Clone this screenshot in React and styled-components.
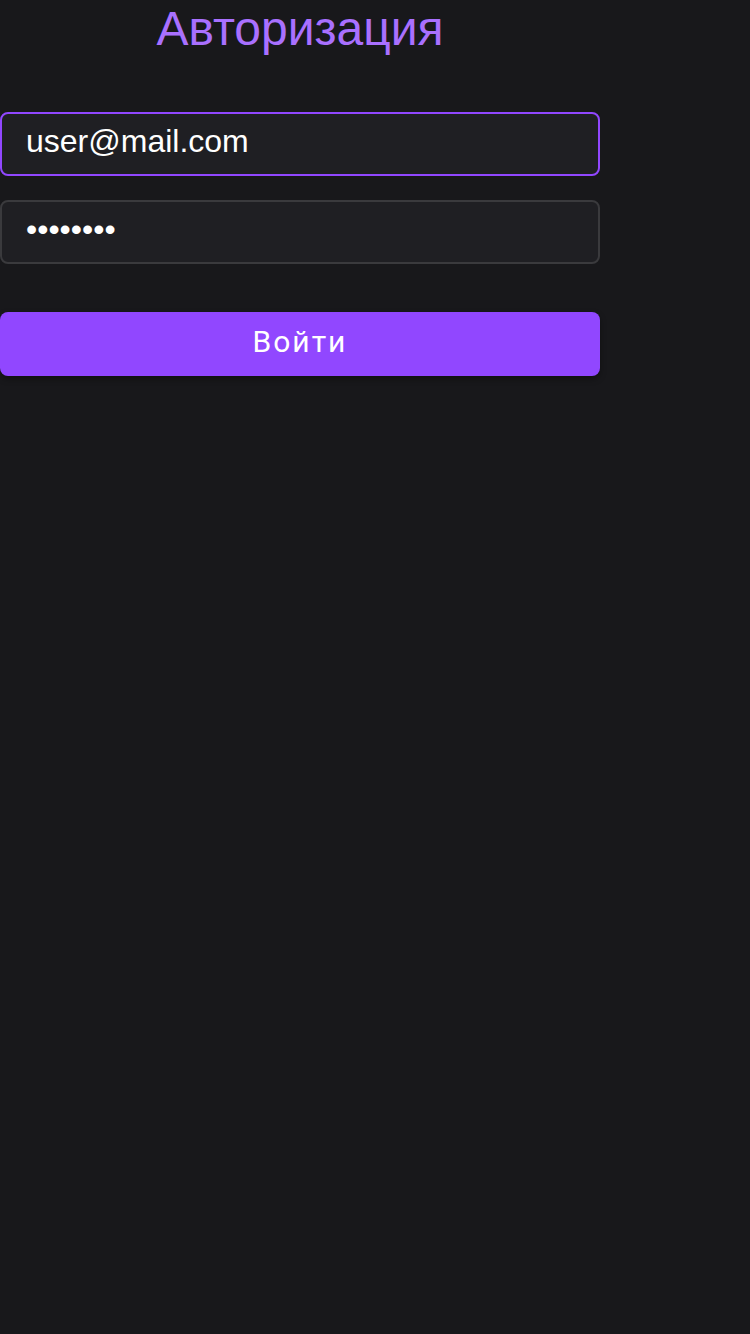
import React from "react";
import styled, { createGlobalStyle } from "styled-components";

const Global = createGlobalStyle`
  html, body { margin: 0; padding: 0; background: #18181b; }
  body { min-height: 1334px; font-family: "Liberation Sans", Arial, sans-serif; }
  * { box-sizing: border-box; }
`;

const Form = styled.form`
  width: 600px;
  display: flex;
  flex-direction: column;
`;

const Title = styled.h1`
  margin: 0;
  padding-top: 1px;
  text-align: center;
  font-family: "Liberation Sans", Arial, sans-serif;
  font-weight: 400;
  font-size: 48px;
  line-height: 55px;
  color: #a970ff;
`;

const Field = styled.input`
  width: 100%;
  height: 64px;
  margin-top: ${(p) => p.$top}px;
  padding: 0 24px 6px;
  background: #1f1f23;
  border: 2px solid ${(p) => (p.$active ? "#9147ff" : "#3a3a3d")};
  border-radius: 8px;
  color: #ffffff;
  font-family: "Liberation Sans", Arial, sans-serif;
  font-size: 32px;
  outline: none;
`;

const Button = styled.button`
  margin-top: 48px;
  height: 64px;
  width: 100%;
  padding: 0 0 6px;
  border: none;
  border-radius: 8px;
  background: #9147ff;
  color: #ffffff;
  font-family: Roboto, "Liberation Sans", sans-serif;
  font-size: 30px;
  letter-spacing: 2px;
  box-shadow: 0 3px 6px rgba(0, 0, 0, 0.35);
  cursor: pointer;
`;

export default function App() {
  return (
    <>
      <Global />
      <Form onSubmit={(e) => e.preventDefault()}>
        <Title>Авторизация</Title>
        <Field $top={56} $active type="email" defaultValue="user@mail.com" />
        <Field $top={24} type="password" defaultValue="password" />
        <Button type="submit">Войти</Button>
      </Form>
    </>
  );
}
